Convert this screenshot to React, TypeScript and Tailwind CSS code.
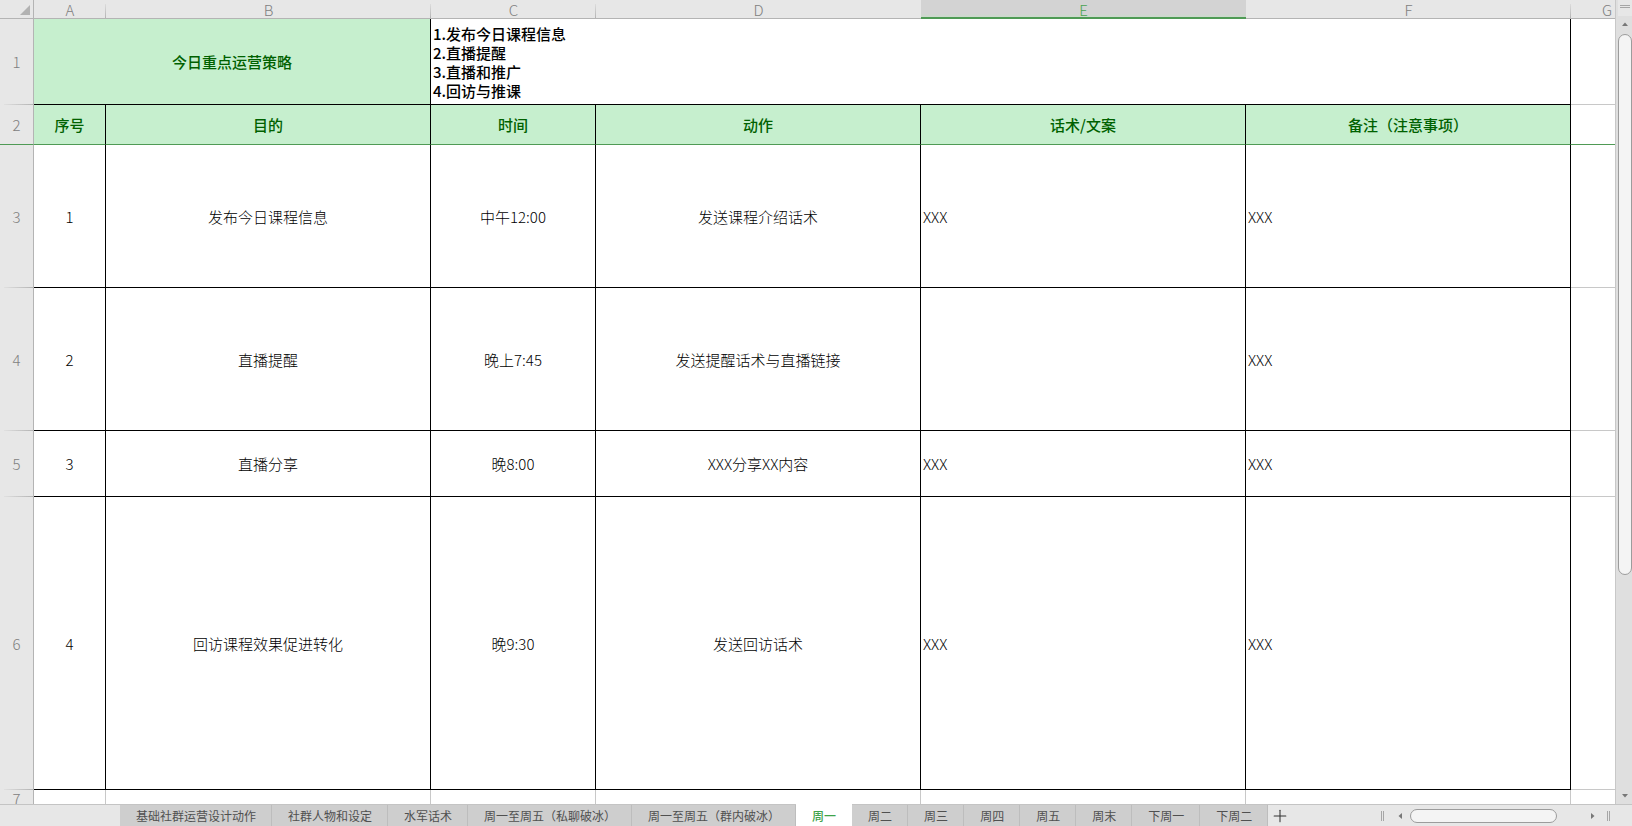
import { Plus } from "lucide-react";

type Align = "center" | "left";

const columns = ["A", "B", "C", "D", "E", "F", "G"];
const activeColumn = "E";

const headings = ["序号", "目的", "时间", "动作", "话术/文案", "备注（注意事项）"];

const strategy = ["1.发布今日课程信息", "2.直播提醒", "3.直播和推广", "4.回访与推课"];

const rows = [
  { n: 3, height: "h-[143px]", cells: ["1", "发布今日课程信息", "中午12:00", "发送课程介绍话术", "XXX", "XXX"] },
  { n: 4, height: "h-[143px]", cells: ["2", "直播提醒", "晚上7:45", "发送提醒话术与直播链接", "", "XXX"] },
  { n: 5, height: "h-[66px]", cells: ["3", "直播分享", "晚8:00", "XXX分享XX内容", "XXX", "XXX"] },
  { n: 6, height: "h-[293px]", cells: ["4", "回访课程效果促进转化", "晚9:30", "发送回访话术", "XXX", "XXX"] },
];

const tabs = [
  "基础社群运营设计动作",
  "社群人物和设定",
  "水军话术",
  "周一至周五（私聊破冰）",
  "周一至周五（群内破冰）",
  "周一",
  "周二",
  "周三",
  "周四",
  "周五",
  "周末",
  "下周一",
  "下周二",
];
const activeTab = "周一";

function ColumnHead({ name }: { name: string }) {
  if (name === activeColumn) {
    return (
      <th
        scope="col"
        className="h-[19px] border-b border-[#4f9a55] bg-linear-to-b from-[#d3d3d3] from-75% to-[#c9dcc9] px-0 pt-0.5 pb-0 text-[15px] leading-4 font-light text-[#4aa350] shadow-[inset_0_-1px_0_#4f9a55]"
      >
        {name}
      </th>
    );
  }
  const edge =
    name === "G" || name === "D"
      ? ""
      : "after:absolute after:right-0 after:bottom-0 after:h-[14px] after:w-px after:bg-linear-to-b after:from-[#dcdcdc] after:to-[#b4b4b4]";
  const align = name === "G" ? "pr-[3px] pl-0 text-right" : "px-0 text-center";
  return (
    <th
      scope="col"
      className={`relative h-[19px] border-b border-[#b4b4b4] pt-0.5 pb-0 text-[15px] leading-4 font-light text-[#808080] ${align} ${edge}`}
    >
      {name}
    </th>
  );
}

function RowHead({ n, frozen = false }: { n: number; frozen?: boolean }) {
  const edge = frozen
    ? "border-b border-b-[#4f9a55]"
    : "after:absolute after:right-0 after:bottom-0 after:h-px after:w-[29px] after:bg-linear-to-r after:from-[#e0e0e0] after:to-[#b4b4b4]";
  return (
    <th
      scope="row"
      className={`relative border-r border-r-[#b4b4b4] bg-[#e7e7e7] p-0 text-center text-[15px] leading-[18px] font-light text-[#808080] ${edge}`}
    >
      {n}
    </th>
  );
}

function Cell({ text, align }: { text: string; align: Align }) {
  const side = align === "left" ? "pr-0 pl-0.5 text-left" : "px-0 text-center";
  return (
    <td className={`border-r border-b border-black pt-0.5 pb-0 text-[15px] font-light text-black ${side}`}>{text}</td>
  );
}

function Arrow({ label, turn }: { label: string; turn: string }) {
  return (
    <button type="button" aria-label={label} className="flex size-4 shrink-0 items-center justify-center">
      <svg viewBox="0 0 8 8" className={`size-2 fill-[#777777] ${turn}`}>
        <path d="M1 6 4 2.5 7 6Z" />
      </svg>
    </button>
  );
}

function Grip() {
  return <span className="h-[10px] w-[3px] shrink-0 border-x border-[#a6a6a6]" />;
}

function Sheet() {
  return (
    <table className="w-full table-fixed border-separate border-spacing-0 bg-white">
      <colgroup>
        <col className="w-[34px]" />
        <col className="w-[72px]" />
        <col className="w-[325px]" />
        <col className="w-[165px]" />
        <col className="w-[325px]" />
        <col className="w-[325px]" />
        <col className="w-[325px]" />
        <col />
      </colgroup>
      <thead className="bg-[#e7e7e7]">
        <tr>
          <th className="h-[19px] border-r border-b border-[#b4b4b4] p-0">
            <button type="button" aria-label="全选" className="flex h-[18px] w-full items-center justify-end pt-0.5 pr-[3px]">
              <svg viewBox="0 0 10 10" className="size-[10px] fill-[#b2b2b2]">
                <path d="M10 0V10H0Z" />
              </svg>
            </button>
          </th>
          {columns.map((name) => (
            <ColumnHead key={name} name={name} />
          ))}
        </tr>
      </thead>
      <tbody>
        <tr className="h-[86px]">
          <RowHead n={1} />
          <td
            colSpan={2}
            className="border-r border-b border-black bg-[#c6efce] px-0 pt-0.5 pb-0 text-center text-[15px] font-medium text-[#006100]"
          >
            今日重点运营策略
          </td>
          <td colSpan={4} className="border-r border-b border-black py-0 pr-0 pl-0.5 text-[15px] leading-[19px] font-medium text-black">
            {strategy.map((line) => (
              <p key={line}>{line}</p>
            ))}
          </td>
          <td className="border-b border-[#c8c8c8] p-0" />
        </tr>
        <tr className="h-[40px]">
          <RowHead n={2} frozen />
          {headings.map((text) => (
            <td
              key={text}
              className="border-r border-b border-r-black border-b-[#4f9a55] bg-[#c6efce] px-0 pt-0.5 pb-0 text-center text-[15px] font-medium text-[#006100]"
            >
              {text}
            </td>
          ))}
          <td className="border-b border-[#4f9a55] p-0" />
        </tr>
        {rows.map((row) => (
          <tr key={row.n} className={row.height}>
            <RowHead n={row.n} />
            {row.cells.map((text, i) => (
              <Cell key={i} text={text} align={i > 3 ? "left" : "center"} />
            ))}
            <td className="border-b border-[#c8c8c8] p-0" />
          </tr>
        ))}
        <tr className="h-[18px]">
          <RowHead n={7} />
          {columns.map((name) => (
            <td key={name} className={`p-0 ${name === "G" ? "" : "border-r border-[#c8c8c8]"}`} />
          ))}
        </tr>
      </tbody>
    </table>
  );
}

export default function App() {
  return (
    <div className="flex h-screen flex-col overflow-hidden bg-[#e7e7e7] font-['Noto_Sans_CJK_SC',sans-serif]">
      <main className="flex min-h-0 flex-1">
        <div className="min-w-0 flex-1 overflow-hidden">
          <Sheet />
        </div>
        <div className="flex w-[17px] shrink-0 flex-col items-center border-l border-[#c8c8c8] bg-[#dfdfdf] pl-0.5">
          <div className="flex h-4 w-full shrink-0 items-start justify-center bg-[#e7e7e7] pt-[5px]">
            <span className="h-[3px] w-[10px] border-y border-[#a6a6a6]" />
          </div>
          <Arrow label="向上滚动" turn="" />
          <div className="flex min-h-0 w-full flex-1 flex-col pt-0.5">
            <div className="h-[541px] w-full rounded-full border border-[#9c9c9c] bg-[#f4f4f4]" />
          </div>
          <Arrow label="向下滚动" turn="rotate-180" />
        </div>
      </main>
      <footer className="flex h-[22px] shrink-0 items-stretch border-t border-[#c4c4c4] pr-[22px]">
        <nav className="ml-[120px] flex">
          {tabs.map((name) => (
            <button
              key={name}
              type="button"
              className={
                name === activeTab
                  ? "-mt-px bg-white px-4 pt-px text-[12px] font-medium whitespace-nowrap text-[#3fa34a]"
                  : "border-r border-[#bdbdbd] bg-[#cecece] pr-[15px] pl-4 text-[12px] whitespace-nowrap text-[#505050]"
              }
            >
              {name}
            </button>
          ))}
          <button type="button" aria-label="新建工作表" className="flex w-6 items-center justify-center">
            <Plus className="size-5 text-[#333333]" strokeWidth={1.25} />
          </button>
        </nav>
        <div className="ml-auto flex items-center">
          <Grip />
          <div className="ml-2 flex items-center gap-0.5">
            <Arrow label="向左滚动" turn="-rotate-90" />
            <div className="flex w-[173px]">
              <div className="h-[14px] w-[147px] rounded-full border border-[#9c9c9c] bg-[#f4f4f4]" />
            </div>
            <Arrow label="向右滚动" turn="rotate-90" />
          </div>
          <span className="w-1.5" />
          <Grip />
        </div>
      </footer>
    </div>
  );
}
